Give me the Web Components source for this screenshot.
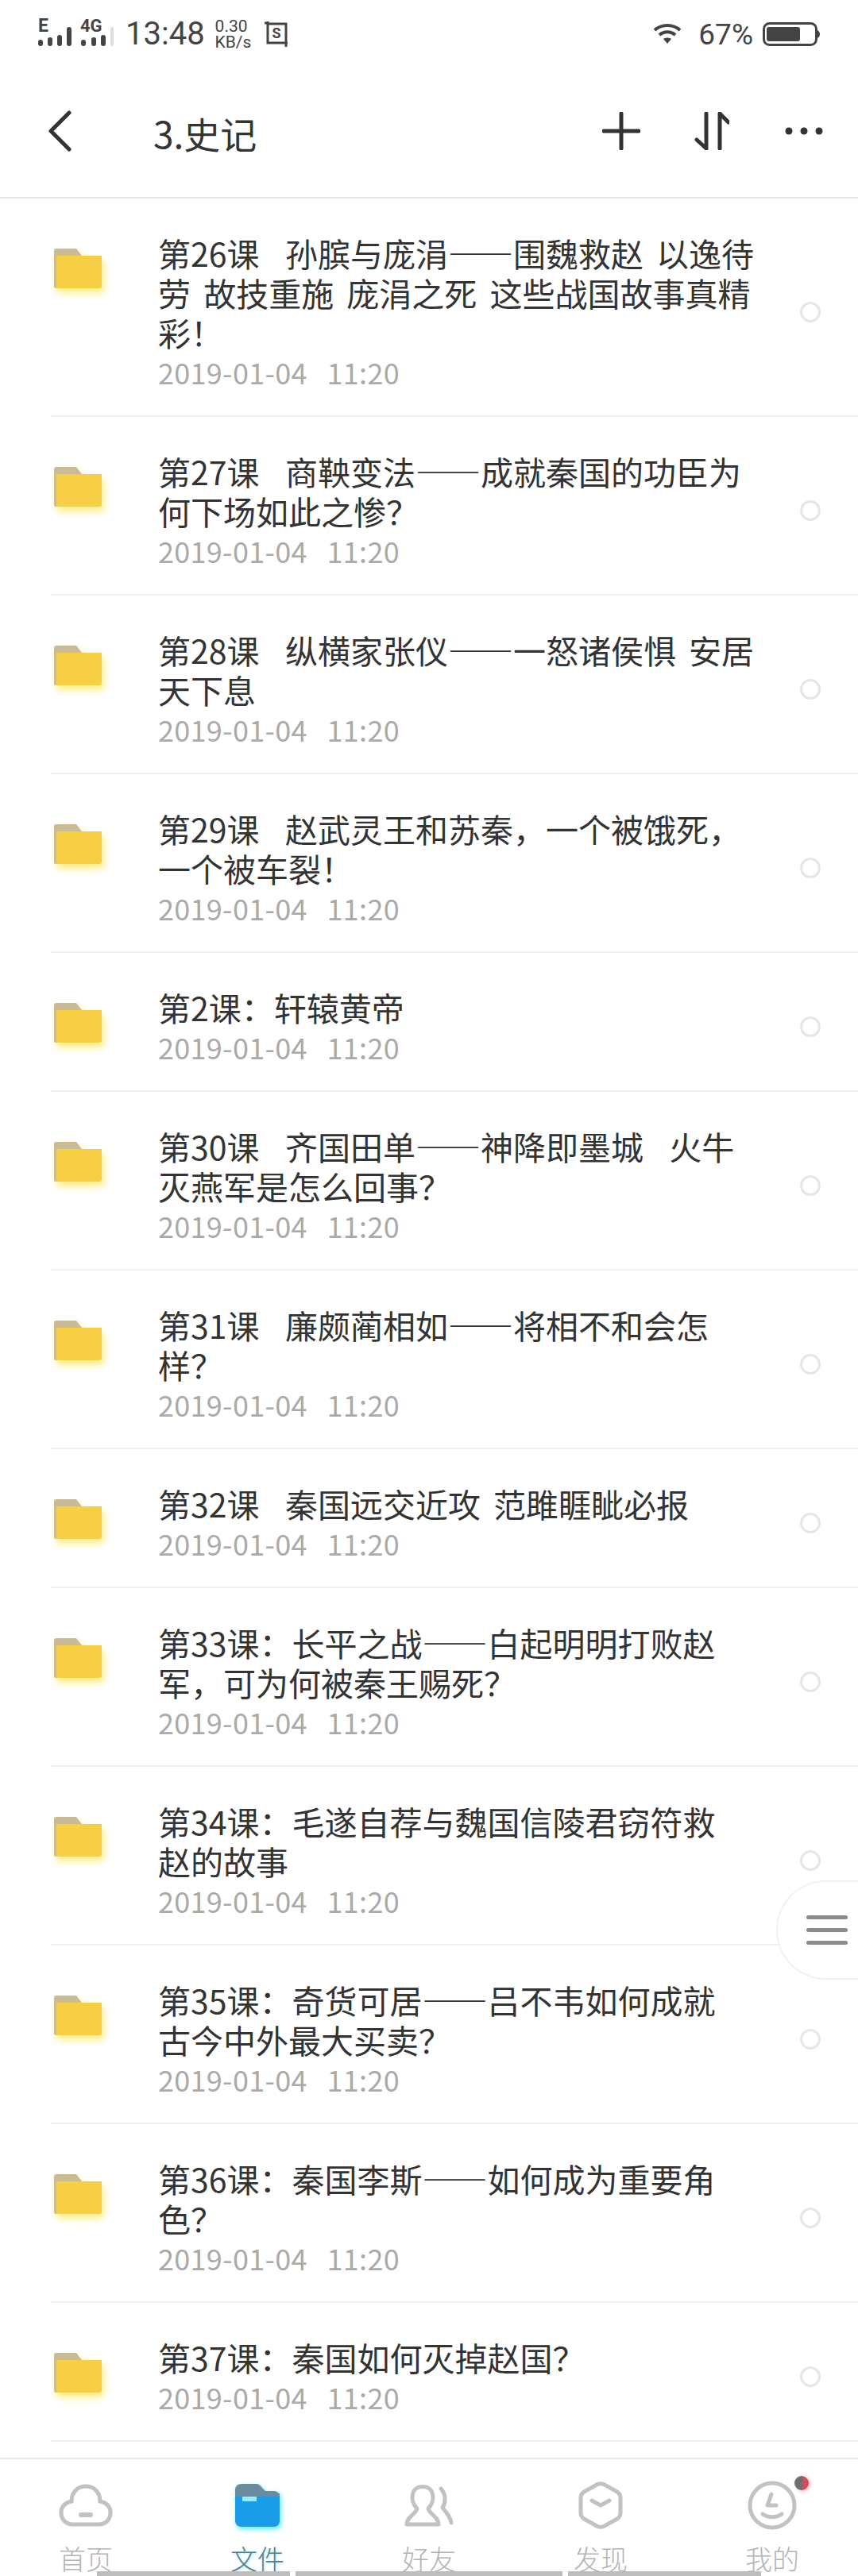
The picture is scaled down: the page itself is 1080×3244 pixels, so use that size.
<!DOCTYPE html>
<html lang="zh">
<head>
<meta charset="utf-8">
<title>3.史记</title>
<style>
  html, body { margin: 0; background: #fff; }
  body {
    position: relative;
    display: flex;
    flex-direction: column;
    height: 3244px;
    overflow: hidden;
    font-family: "Noto Sans CJK SC", "Noto Sans", sans-serif;
    color: #333;
  }
  file-list { flex: 1; }
</style>
</head>
<body>
<status-bar></status-bar>
<top-bar title="3.史记"></top-bar>
<file-list>
  <file-row>第26课  孙膑与庞涓——围魏救赵 以逸待劳 故技重施 庞涓之死 这些战国故事真精彩！</file-row>
  <file-row>第27课  商鞅变法——成就秦国的功臣为何下场如此之惨？</file-row>
  <file-row>第28课  纵横家张仪——一怒诸侯惧 安居天下息</file-row>
  <file-row>第29课  赵武灵王和苏秦，一个被饿死，一个被车裂！</file-row>
  <file-row>第2课：轩辕黄帝</file-row>
  <file-row>第30课  齐国田单——神降即墨城  火牛灭燕军是怎么回事？</file-row>
  <file-row>第31课  廉颇蔺相如——将相不和会怎样？</file-row>
  <file-row>第32课  秦国远交近攻 范雎睚眦必报</file-row>
  <file-row>第33课：长平之战——白起明明打败赵军，可为何被秦王赐死？</file-row>
  <file-row narrow>第34课：毛遂自荐与魏国信陵君窃符救赵的故事</file-row>
  <file-row narrow>第35课：奇货可居——吕不韦如何成就古今中外最大买卖？</file-row>
  <file-row>第36课：秦国李斯——如何成为重要角色？</file-row>
  <file-row>第37课：秦国如何灭掉赵国？</file-row>
</file-list>
<tab-bar>
  <tab-item label="首页" icon="home"></tab-item>
  <tab-item label="文件" icon="file" active></tab-item>
  <tab-item label="好友" icon="friends"></tab-item>
  <tab-item label="发现" icon="find"></tab-item>
  <tab-item label="我的" icon="me" badge></tab-item>
</tab-bar>
<float-handle></float-handle>

<script>
class StatusBar extends HTMLElement {
  constructor() {
    super();
    this.attachShadow({ mode: 'open' }).innerHTML = `
      <style>
        :host {
          display: flex;
          align-items: center;
          height: 92px;
          box-sizing: border-box;
          padding: 0 48px 6px 48px;
          font-family: Roboto, "Liberation Sans", sans-serif;
          color: #444;
        }
        svg { display: block; flex: none; overflow: visible; }
        .signal { align-self: flex-start; margin-top: 13px; }
        .time { font-size: 40px; line-height: 46px; margin-left: 14px; }
        .speed { font-size: 21px; line-height: 20px; margin-left: 13px; display: flex; flex-direction: column; }
        .shot { margin-left: 17px; }
        .right { margin-left: auto; display: flex; align-items: center; }
        .pct { font-size: 37px; margin-left: 22px; margin-right: 12px; }
      </style>
      <svg class="signal" width="96" height="48" viewBox="0 -10 96 48" fill="#444">
        <text x="0" y="17" font-size="23" font-weight="700" font-family="Roboto">E</text>
        <text x="53" y="17" font-size="22" font-weight="700" font-family="Roboto">4G</text>
        <rect x="0" y="27" width="6" height="8" rx="3"/>
        <rect x="12" y="24" width="6" height="11" rx="3"/>
        <rect x="24" y="21" width="6" height="14" rx="3"/>
        <rect x="36" y="11" width="6" height="24" rx="3"/>
        <rect x="54" y="27" width="6" height="8" rx="3"/>
        <rect x="67" y="24" width="6" height="11" rx="3"/>
        <rect x="79" y="21" width="6" height="14" rx="3"/>
        <rect x="91" y="11" width="4" height="24" rx="2" fill="#ddd"/>
      </svg>
      <span class="time">13:48</span>
      <span class="speed"><span>0.30</span><span>KB/s</span></span>
      <svg class="shot" width="32" height="32" viewBox="0 0 32 32" fill="none" stroke="#444" stroke-width="3">
        <path d="M0 2H4M4 0V27H29M4 3H27V32"/>
        <text x="9.5" y="21" font-size="18" font-weight="700" font-family="Roboto" fill="#444" stroke="none">S</text>
      </svg>
      <div class="right">
        <svg width="34" height="26" viewBox="0 0 34 26" fill="none" stroke="#444" stroke-width="4">
          <path d="M1 8C10 0 24 0 33 8"/>
          <path d="M7 14C13 9 21 9 27 14"/>
          <path d="M12 19L17 25L22 19C19 17 15 17 12 19Z" fill="#444" stroke="none"/>
        </svg>
        <span class="pct">67%</span>
        <svg width="72" height="30" viewBox="0 0 72 30">
          <rect x="1.5" y="1.5" width="66" height="27" rx="7" fill="#fff" stroke="#444" stroke-width="3"/>
          <rect x="5" y="6" width="42" height="18" rx="3" fill="#444"/>
          <path d="M69 10C71 11 72 13 72 15C72 17 71 19 69 20Z" fill="#444"/>
        </svg>
      </div>
    `;
  }
}

class TopBar extends HTMLElement {
  constructor() {
    super();
    this.attachShadow({ mode: 'open' }).innerHTML = `
      <style>
        :host {
          display: flex;
          align-items: center;
          height: 150px;
          padding: 0 44px 6px 60px;
          border-bottom: 2px solid #e6e6e6;
          color: #333;
        }
        svg { display: block; flex: none; margin-top: -4px; }
        h1 { margin: 0 0 0 103px; font-size: 46px; font-weight: 400; line-height: 60px; flex: 1; }
        .sort { margin-left: 68px; }
        .more { margin-left: 70px; }
      </style>
      <svg width="30" height="52" viewBox="0 0 30 52" fill="none" stroke="#333" stroke-width="5" stroke-linecap="round" stroke-linejoin="round">
        <path d="M27 3L4 26L27 49"/>
      </svg>
      <h1>${this.getAttribute('title')}</h1>
      <svg width="48" height="48" viewBox="0 0 48 48" fill="none" stroke="#333" stroke-width="5" stroke-linecap="round">
        <path d="M2 24H46M24 2V46"/>
      </svg>
      <svg class="sort" width="44" height="48" viewBox="0 0 44 48" fill="none" stroke="#333" stroke-width="5" stroke-linecap="round" stroke-linejoin="round">
        <path d="M15 2V46L3 35"/>
        <path d="M32 46V2L43 13"/>
      </svg>
      <svg class="more" width="48" height="10" viewBox="0 0 48 10" fill="#333">
        <circle cx="5" cy="5" r="4.5"/><circle cx="24" cy="5" r="4.5"/><circle cx="43" cy="5" r="4.5"/>
      </svg>
    `;
  }
}

class FileList extends HTMLElement {
  constructor() {
    super();
    this.attachShadow({ mode: 'open' }).innerHTML = `
      <style>:host { display: block; }</style>
      <slot></slot>
    `;
  }
}

class FileRow extends HTMLElement {
  constructor() {
    super();
    this.attachShadow({ mode: 'open' }).innerHTML = `
      <style>
        :host {
          display: flex;
          margin-left: 64px;
          padding: 43px 47px 30px 4px;
          border-bottom: 2px solid #efefef;
        }
        .folder {
          flex: none;
          display: block;
          margin: 20px 71px 0 0;
          filter: drop-shadow(3px 6px 5px rgba(255, 232, 90, .75));
        }
        .text { flex: 1; min-width: 0; }
        .title {
          font-size: 41px;
          line-height: 50px;
          color: #333;
          white-space: pre-wrap;
          word-spacing: 7px;
        }
        :host([narrow]) .title { max-width: 730px; }
        .date {
          font-size: 36px;
          line-height: 50px;
          color: #aaa;
          white-space: pre;
          letter-spacing: .3px;
          word-spacing: 4px;
        }
        .radio {
          flex: none;
          align-self: center;
          width: 26px;
          height: 26px;
          margin-left: 44px;
          box-sizing: border-box;
          border: 3px solid #e6e6e6;
          border-radius: 50%;
        }
      </style>
      <svg class="folder" width="60" height="50" viewBox="0 0 60 50">
        <path d="M0 3C0 1 1 0 3 0H28L35 9H57C59 9 60 10 60 12V16H0Z" fill="#c9bb93"/>
        <path d="M0 9H60V47C60 49 59 50 57 50H3C1 50 0 49 0 47Z" fill="#f6cf45"/>
        <path d="M0 9H3V50C1 50 0 49 0 47Z" fill="#cfbf86"/>
      </svg>
      <div class="text">
        <div class="title"><slot></slot></div>
        <div class="date">2019-01-04  11:20</div>
      </div>
      <div class="radio"></div>
    `;
  }
}

class TabBar extends HTMLElement {
  constructor() {
    super();
    this.attachShadow({ mode: 'open' }).innerHTML = `
      <style>
        :host {
          position: relative;
          display: grid;
          grid-template-columns: repeat(5, 1fr);
          height: 149px;
          box-sizing: border-box;
          padding-top: 29px;
          border-top: 2px solid #e8e8e8;
        }
        .gesture {
          position: absolute;
          left: 122px;
          bottom: 0;
          width: 836px;
          height: 6px;
          display: flex;
          gap: 7px;
        }
        .gesture i { display: block; background: #bdbdbd; }
      </style>
      <slot></slot>
      <div class="gesture">
        <i style="width:243px"></i><i style="width:336px"></i><i style="width:243px"></i>
      </div>
    `;
  }
}

const TAB_ICONS = {
  home: `<svg width="68" height="54" viewBox="0 0 68 54" fill="none" stroke="#c2c2c2" stroke-width="5">
      <path d="M18 51C8 51 3 44 3 36C3 28 9 23 16 22C16 10 24 3 34 3C44 3 52 10 52 22C59 23 65 28 65 36C65 44 60 51 50 51Z"/>
      <rect x="25" y="36" width="18" height="6" rx="3" fill="#c2c2c2" stroke="none"/>
    </svg>`,
  file: `<svg width="56" height="54" viewBox="0 0 56 54" style="filter:drop-shadow(2px 3px 3px rgba(40,230,250,.8))">
      <path d="M0 12H56V46C56 51 53 54 48 54H8C3 54 0 51 0 46Z" fill="#1b9ce8"/>
      <path d="M0 8C0 3 3 0 8 0H26C30 0 32 2 34 5L38 9H49C53 9 56 12 56 16H0Z" fill="#6b8c9f"/>
      <rect x="9" y="16" width="18" height="6" fill="#9fe9fb"/>
    </svg>`,
  friends: `<svg width="62" height="54" viewBox="0 0 62 54" fill="none" stroke="#c2c2c2" stroke-width="5" stroke-linejoin="round" stroke-linecap="round">
      <path d="M3 51C3 41 15 38 16 31C10 25 9 17 11 11C14 1 32 1 35 11C37 17 36 25 30 31C31 38 43 41 43 51Z"/>
      <path d="M46 6C53 14 52 24 48 30C53 36 58 42 59 49"/>
    </svg>`,
  find: `<svg width="56" height="60" viewBox="0 0 56 60" fill="none" stroke="#c2c2c2" stroke-width="5" stroke-linejoin="round" stroke-linecap="round">
      <path d="M24 3.5C26.5 2.5 29.5 2.5 32 3.5L48 12.5C51.5 14.5 53 17 53 20V40C53 43 51.5 45.5 48 47.5L32 56.5C29.5 57.5 26.5 57.5 24 56.5L8 47.5C4.5 45.5 3 43 3 40V20C3 17 4.5 14.5 8 12.5Z"/>
      <path d="M17 24L28 30L39 24"/>
    </svg>`,
  me: `<svg width="62" height="62" viewBox="0 0 62 62" fill="none" stroke="#c2c2c2" stroke-width="5" stroke-linecap="round" stroke-linejoin="round">
      <circle cx="31" cy="31" r="28"/>
      <path d="M30 17L25 31H36"/>
      <path d="M19 42C26 47 36 47 43 42"/>
    </svg>`
};

class TabItem extends HTMLElement {
  constructor() {
    super();
    const active = this.hasAttribute('active');
    this.attachShadow({ mode: 'open' }).innerHTML = `
      <style>
        :host {
          position: relative;
          display: flex;
          flex-direction: column;
          align-items: center;
        }
        .icon { height: 62px; display: flex; align-items: center; justify-content: center; margin-top: -2px; }
        svg { display: block; }
        .label {
          margin-top: 15px;
          font-size: 34px;
          line-height: 42px;
          font-weight: 300;
          color: ${active ? '#557f88' : '#b4b4b4'};
          ${active ? 'text-shadow: 1px 1px 3px #9fe9fb;' : ''}
        }
        .badge {
          position: absolute;
          left: 136px;
          top: -8px;
          width: 18px;
          height: 18px;
          border-radius: 50%;
          background: linear-gradient(90deg, #6f6f72 0 45%, #d24c5c 70%);
          box-shadow: 2px 1px 4px rgba(235, 90, 110, .5);
        }
      </style>
      <div class="icon">${TAB_ICONS[this.getAttribute('icon')]}</div>
      <div class="label">${this.getAttribute('label')}</div>
      ${this.hasAttribute('badge') ? '<div class="badge"></div>' : ''}
    `;
  }
}

class FloatHandle extends HTMLElement {
  constructor() {
    super();
    this.attachShadow({ mode: 'open' }).innerHTML = `
      <style>
        :host {
          position: absolute;
          right: 0;
          top: 2368px;
          width: 103px;
          height: 125px;
          box-sizing: border-box;
          display: flex;
          flex-direction: column;
          justify-content: center;
          gap: 11px;
          padding-left: 36px;
          background: #fff;
          border: 2px solid #f1f1f1;
          border-right: 0;
          border-radius: 63px 0 0 63px;
        }
        i { display: block; width: 52px; height: 5px; border-radius: 3px; background: #8a8a8a; }
      </style>
      <i></i><i></i><i></i>
    `;
  }
}

customElements.define('status-bar', StatusBar);
customElements.define('top-bar', TopBar);
customElements.define('file-list', FileList);
customElements.define('file-row', FileRow);
customElements.define('tab-bar', TabBar);
customElements.define('tab-item', TabItem);
customElements.define('float-handle', FloatHandle);
</script>
</body>
</html>
